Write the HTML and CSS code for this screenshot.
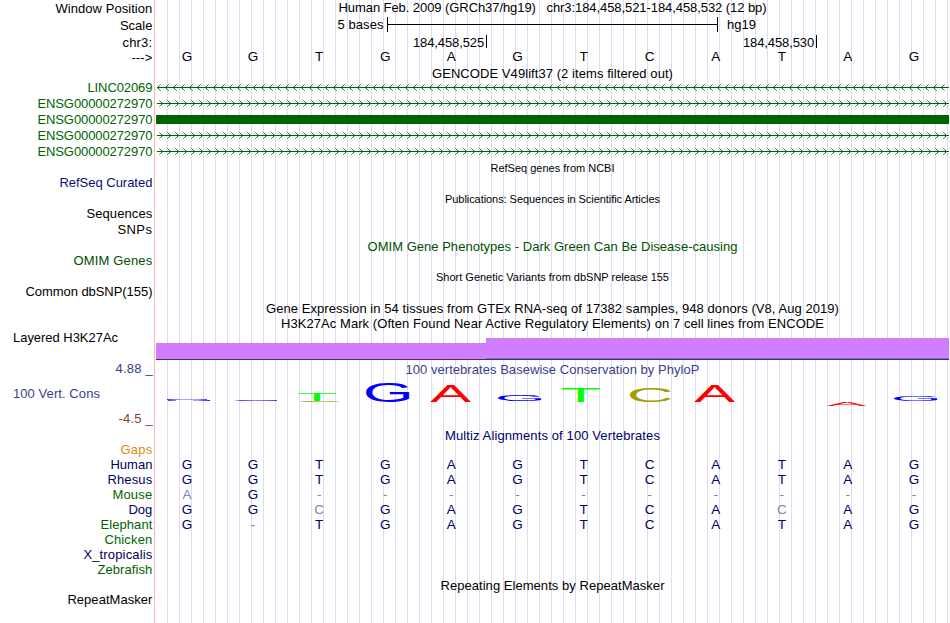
FILE: index.html
```html
<!DOCTYPE html>
<html lang="en">
<head>
<meta charset="utf-8">
<title>Genome Browser chr3:184,458,521-184,458,532</title>
<link rel="stylesheet" href="styles.css">
</head>
<body>
<main class="browser">
  <section class="track header">
    <div class="labels">
      <span data-w="97">Window Position</span>
      <span>Scale</span>
      <span data-w="30">chr3:</span>
      <span data-w="21">---&gt;</span>
    </div>
    <div class="main">
      <h1 class="title"><span data-w="428">Human Feb. 2009 (GRCh37/hg19)&nbsp;&nbsp; chr3:184,458,521-184,458,532 (12 bp)</span></h1>
      <div class="scale"><span class="scale-size"><span data-w="46">5 bases</span></span><i class="ruler"></i><span data-w="29">hg19</span></div>
      <div class="coords"><span class="coord"><span data-w="71">184,458,525</span></span><span class="coord"><span data-w="71">184,458,530</span></span></div>
      <div class="seq" data-seq="GGTGAGTCATAG"></div>
    </div>
  </section>

  <section class="track gencode">
    <div class="labels green">
      <span data-w="65">LINC02069</span>
      <span data-w="115">ENSG00000272970</span>
      <span data-w="115">ENSG00000272970</span>
      <span data-w="115">ENSG00000272970</span>
      <span data-w="115">ENSG00000272970</span>
    </div>
    <div class="main">
      <h2 class="title"><span data-w="241">GENCODE V49lift37 (2 items filtered out)</span></h2>
      <svg class="gene" width="793" height="16"><defs>
        <pattern id="rev" x="1" y="0" width="8" height="16" patternUnits="userSpaceOnUse"><g fill="#006400"><rect x="0" y="7" width="1" height="1"/><rect x="1" y="6" width="1" height="1"/><rect x="1" y="8" width="1" height="1"/><rect x="2" y="5" width="1" height="1" opacity=".8"/><rect x="2" y="9" width="1" height="1" opacity=".8"/><rect x="3" y="4" width="1" height="1" opacity=".5"/><rect x="3" y="10" width="1" height="1" opacity=".5"/></g></pattern>
        <pattern id="fwd" x="3" y="0" width="8" height="16" patternUnits="userSpaceOnUse"><g fill="#006400"><rect x="3" y="7" width="1" height="1"/><rect x="2" y="6" width="1" height="1"/><rect x="2" y="8" width="1" height="1"/><rect x="1" y="5" width="1" height="1" opacity=".8"/><rect x="1" y="9" width="1" height="1" opacity=".8"/><rect x="0" y="4" width="1" height="1" opacity=".5"/><rect x="0" y="10" width="1" height="1" opacity=".5"/></g></pattern></defs>
        <rect x="1" y="7" width="792" height="1" fill="#006400"/><rect x="1" width="792" height="16" fill="url(#rev)"/></svg>
      <svg class="gene" width="793" height="16"><rect x="1" y="7" width="792" height="1" fill="#006400"/><rect x="1" width="792" height="16" fill="url(#fwd)"/></svg>
      <div class="exon"></div>
      <svg class="gene" width="793" height="16"><rect x="1" y="7" width="792" height="1" fill="#006400"/><rect x="1" width="792" height="16" fill="url(#fwd)"/></svg>
      <svg class="gene" width="793" height="16"><rect x="1" y="7" width="792" height="1" fill="#006400"/><rect x="1" width="792" height="16" fill="url(#fwd)"/></svg>
    </div>
  </section>

  <section class="track refseq">
    <div class="labels blue"><span data-w="93">RefSeq Curated</span></div>
    <div class="main"><h2 class="title small"><span data-w="124">RefSeq genes from NCBI</span></h2></div>
  </section>

  <section class="track pubs">
    <div class="labels"><span data-w="66">Sequences</span><span data-w="35">SNPs</span></div>
    <div class="main"><h2 class="title small"><span data-w="215">Publications: Sequences in Scientific Articles</span></h2></div>
  </section>

  <section class="track omim">
    <div class="labels dark-green"><span data-w="79">OMIM Genes</span></div>
    <div class="main"><h2 class="title dark-green"><span data-w="370">OMIM Gene Phenotypes - Dark Green Can Be Disease-causing</span></h2></div>
  </section>

  <section class="track snp">
    <div class="labels"><span data-w="127">Common dbSNP(155)</span></div>
    <div class="main"><h2 class="title small"><span data-w="233">Short Genetic Variants from dbSNP release 155</span></h2></div>
  </section>

  <section class="track gtex">
    <div class="labels"></div>
    <div class="main"><h2 class="title"><span data-w="573">Gene Expression in 54 tissues from GTEx RNA-seq of 17382 samples, 948 donors (V8, Aug 2019)</span></h2></div>
  </section>

  <section class="track h3k">
    <div class="labels left"><span data-w="105">Layered H3K27Ac</span></div>
    <div class="main">
      <h2 class="title"><span data-w="543">H3K27Ac Mark (Often Found Near Active Regulatory Elements) on 7 cell lines from ENCODE</span></h2>
      <div class="signal"><i class="low"></i><i class="high"></i></div>
    </div>
  </section>

  <section class="track cons">
    <div class="labels">
      <span class="max" data-w="37.5">4.88 _</span>
      <span class="name" data-w="87">100 Vert. Cons</span>
      <span class="min" data-w="34.5">-4.5 _</span>
    </div>
    <div class="main">
      <h2 class="title cons-title"><span data-w="294">100 vertebrates Basewise Conservation by PhyloP</span></h2>
      <svg class="logo" width="793" height="46" font-size="100">
        <defs>
          <linearGradient id="flatG"><stop offset="0" stop-color="#00f" stop-opacity=".8"/><stop offset=".3" stop-color="#00f" stop-opacity=".35"/><stop offset=".7" stop-color="#00f" stop-opacity=".35"/><stop offset="1" stop-color="#00f" stop-opacity=".9"/></linearGradient>
          <linearGradient id="thinG"><stop offset="0" stop-color="#00f" stop-opacity=".2"/><stop offset=".15" stop-color="#00f" stop-opacity=".7"/><stop offset=".5" stop-color="#00f" stop-opacity=".45"/><stop offset="1" stop-color="#00f" stop-opacity=".75"/></linearGradient>
          <linearGradient id="thinC"><stop offset="0" stop-color="#a0a000" stop-opacity=".5"/><stop offset=".2" stop-color="#a0a000" stop-opacity=".9"/><stop offset=".5" stop-color="#a0a000" stop-opacity=".45"/><stop offset=".8" stop-color="#a0a000" stop-opacity=".8"/><stop offset="1" stop-color="#a0a000" stop-opacity=".1"/></linearGradient>
        </defs>
        <path d="M11 22H51V23H54V24H37V23H20V24H12V23H11Z" fill="url(#flatG)"/>
        <rect x="79" y="23" width="42" height="1" fill="url(#thinG)"/>
        <rect x="145" y="24" width="39" height="1" fill="url(#thinC)"/>
        <g class="g">
          <text transform="matrix(.657 0 0 .268 206.7 24.8)">G</text>
          <text transform="matrix(.657 0 0 .083 338.7 23.9)">G</text>
          <text transform="matrix(.657 0 0 .07 734.7 23.9)">G</text>
        </g>
        <g class="t">
          <text transform="matrix(.666 0 0 .116 140.7 24)">T</text>
          <text transform="matrix(.666 0 0 .2 404.5 25)">T</text>
        </g>
        <g class="c">
          <text transform="matrix(.65 0 0 .193 470.8 24.8)">C</text>
        </g>
        <g class="a">
          <text transform="matrix(.613 0 0 .247 274.3 25)">A</text>
          <text transform="matrix(.613 0 0 .247 538.3 25)">A</text>
          <text transform="matrix(.605 0 0 .054 670.6 29)">A</text>
        </g>
      </svg>
    </div>
  </section>

  <section class="track multiz">
    <div class="labels">
      <span class="orange" data-w="32">Gaps</span>
      <span data-w="42">Human</span>
      <span data-w="45">Rhesus</span>
      <span class="green" data-w="40">Mouse</span>
      <span data-w="24">Dog</span>
      <span class="green" data-w="52">Elephant</span>
      <span class="green" data-w="48">Chicken</span>
      <span data-w="69">X_tropicalis</span>
      <span class="green" data-w="55">Zebrafish</span>
    </div>
    <div class="main">
      <h2 class="title"><span data-w="215">Multiz Alignments of 100 Vertebrates</span></h2>
      <div class="seq first" data-seq="GGTGAGTCATAG"></div>
      <div class="seq" data-seq="GGTGAGTCATAG"></div>
      <div class="seq" data-seq="aG----------"></div>
      <div class="seq" data-seq="GGcGAGTCAcAG"></div>
      <div class="seq" data-seq="G-TGAGTCATAG"></div>
    </div>
  </section>

  <section class="track repeats">
    <div class="labels"><span data-w="85">RepeatMasker</span></div>
    <div class="main"><h2 class="title"><span data-w="224">Repeating Elements by RepeatMasker</span></h2></div>
  </section>
</main>
<script src="tracks.js"></script>
</body>
</html>
```
FILE: styles.css
```css
* { box-sizing: border-box; }
body { margin: 0; background: #fff; color: #000; font: 13px/15px "Liberation Sans", Arial, sans-serif; }

.browser {
  width: 949px; height: 623px; overflow: hidden;
  background:
    linear-gradient(#ffb3b3, #ffb3b3) 154px 0 / 1px 100% no-repeat,
    repeating-linear-gradient(90deg, transparent 0 11px, #dcdcf5 11px 12px) 156px 0 / 793px 100% no-repeat;
}
.track { display: grid; grid-template-columns: 153px 793px; column-gap: 3px; }
.labels { display: flex; flex-direction: column; align-items: flex-end; padding-right: .6px; }
.labels span, .title span, .scale span, .coord span { white-space: nowrap; }
.main { display: flex; flex-direction: column; min-width: 0; }
.title { margin: 0; font-size: 13px; font-weight: 400; height: 15px; text-align: center; }
.small { font-size: 11px; line-height: 17px; }

.green { color: #006400; }
.dark-green { color: #005000; }
.blue { color: #0c0c78; }
.orange { color: #e08a0a; }

.header { height: 66px; }
.header .labels { padding-top: 1px; gap: 2px; }
.header .labels span:last-child { margin-top: -2px; }
.scale { display: flex; height: 15px; margin-top: 2px; }
.scale-size { width: 227.5px; text-align: right; margin-right: 3.5px; }
.ruler { width: 331px; margin-right: 9px; border: solid #000; border-width: 0 1px; background: linear-gradient(#000, #000) 0 7px / 100% 1px no-repeat; }
.coords { display: flex; height: 14px; margin-top: 3px; }
.coord { width: 330px; height: 13px; padding-right: 2px; text-align: right; border-right: 1px solid #000; }
.coord:first-child { width: 331px; }

.seq { display: grid; grid-template-columns: repeat(12, 1fr); height: 15px; width: 793px; font-size: 13.5px; text-align: center; }
.seq span { position: relative; left: -2px; }
.seq .faded { color: #8282b4; }
.seq .gap { color: #80808c; }

.gencode { height: 94px; }
.gencode .labels { padding-top: 14px; gap: 1px; }
.gencode .title { height: 14px; }
.gene { display: block; }
.exon { height: 9px; margin: 3px 0 4px; background: #006400; }

.refseq { height: 31px; }
.refseq .labels { padding-top: 15px; }
.pubs { height: 47px; }
.pubs .labels { padding-top: 15px; gap: 1px; }
.omim { height: 31px; }
.omim .labels { padding-top: 15px; }
.omim .main { padding-top: 1px; }
.snp { height: 31px; }
.snp .labels { padding-top: 15px; }
.gtex { height: 16px; }
.gtex .main { padding-top: 1px; }

.h3k { height: 45px; }
.labels.left { align-items: flex-start; padding: 14px 0 0 13px; }
.signal { display: flex; align-items: flex-end; height: 22px; margin-top: 7px; border-bottom: 1px solid #4b2c5f; }
.low { width: 330px; height: 16px; background: #d17dff; }
.high { flex: 1; height: 21px; background: #d17dff; border-bottom: 1px solid #6b70d8; }

.cons { height: 66px; color: #3c3c8c; }
.cons .labels { gap: 10px; padding-right: 0; }
.cons .name { align-self: flex-start; margin-left: 13px; }
.cons .min { color: #8c3c3c; }
.cons .main { padding-top: 1px; }
.logo { display: block; }
.g { fill: #00f; }
.t { fill: #0f0; }
.c { fill: #a0a000; }
.a { fill: #f00; }

.multiz { height: 150px; color: #000064; }
.multiz .labels { padding-top: 15px; }
.multiz .main { padding-top: 1px; }
.seq.first { margin-top: 14px; }

.repeats { height: 46px; }
.repeats .labels { padding-top: 15px; }
.repeats .main { padding-top: 1px; }
```
FILE: tracks.js
```js
// One cell per base; lower case marks a base that differs from the reference genome.
document.querySelectorAll('[data-seq]').forEach(row => {
  for (const ch of row.dataset.seq) {
    const cell = document.createElement('span');
    cell.textContent = ch.toUpperCase();
    if (ch === '-') cell.className = 'gap';
    else if (ch !== ch.toUpperCase()) cell.className = 'faded';
    row.append(cell);
  }
});

// Track each text out to its set width.
document.querySelectorAll('[data-w]').forEach(el => {
  const extra = Number(el.dataset.w) - el.getBoundingClientRect().width;
  el.style.letterSpacing = extra / el.textContent.length + 'px';
});
```
